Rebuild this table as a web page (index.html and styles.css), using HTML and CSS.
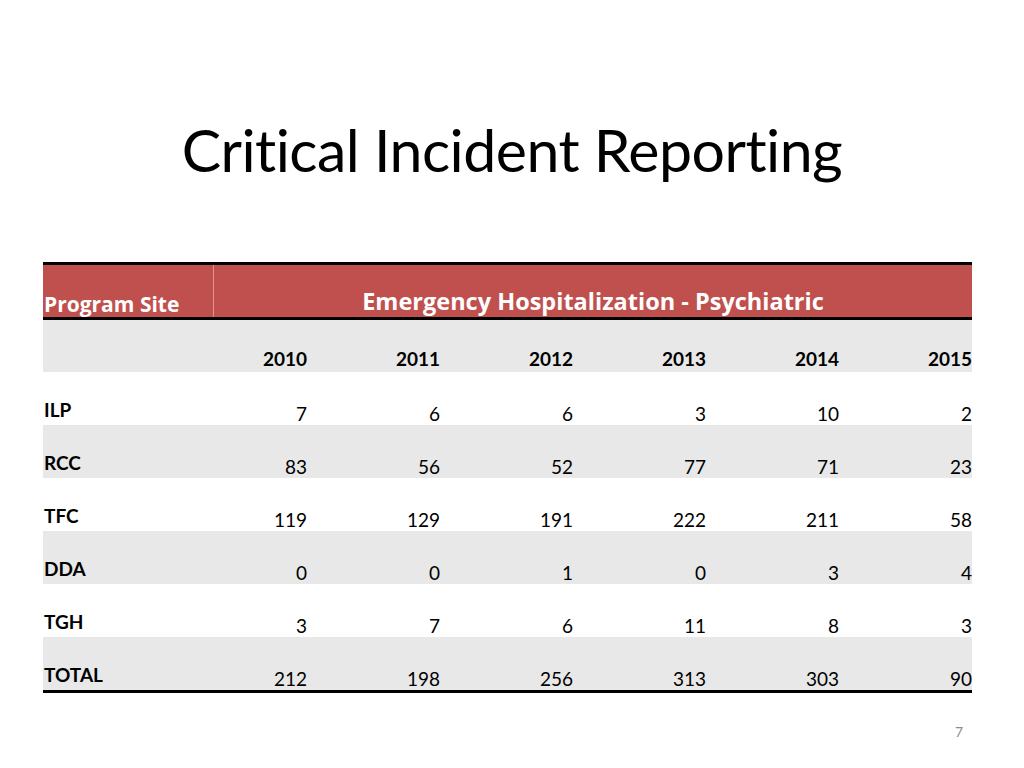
FILE: index.html
```html
<!DOCTYPE html>
<html lang="en">
<head>
<meta charset="utf-8">
<title>Critical Incident Reporting</title>
<link rel="stylesheet" href="styles.css">
</head>
<body>
<main class="slide">
  <h1 class="title">Critical Incident Reporting</h1>
  <section class="table">
    <div class="head">
      <div class="head-site">Program Site</div>
      <div class="head-measure">Emergency Hospitalization - Psychiatric</div>
    </div>
    <div class="row shade years">
      <div class="label"></div>
      <div class="num">2010</div><div class="num">2011</div><div class="num">2012</div><div class="num">2013</div><div class="num">2014</div><div class="num">2015</div>
    </div>
    <div class="row">
      <div class="label">ILP</div>
      <div class="num">7</div><div class="num">6</div><div class="num">6</div><div class="num">3</div><div class="num">10</div><div class="num">2</div>
    </div>
    <div class="row shade">
      <div class="label">RCC</div>
      <div class="num">83</div><div class="num">56</div><div class="num">52</div><div class="num">77</div><div class="num">71</div><div class="num">23</div>
    </div>
    <div class="row">
      <div class="label">TFC</div>
      <div class="num">119</div><div class="num">129</div><div class="num">191</div><div class="num">222</div><div class="num">211</div><div class="num">58</div>
    </div>
    <div class="row shade">
      <div class="label">DDA</div>
      <div class="num">0</div><div class="num">0</div><div class="num">1</div><div class="num">0</div><div class="num">3</div><div class="num">4</div>
    </div>
    <div class="row">
      <div class="label">TGH</div>
      <div class="num">3</div><div class="num">7</div><div class="num">6</div><div class="num">11</div><div class="num">8</div><div class="num">3</div>
    </div>
    <div class="row shade total">
      <div class="label">TOTAL</div>
      <div class="num">212</div><div class="num">198</div><div class="num">256</div><div class="num">313</div><div class="num">303</div><div class="num">90</div>
    </div>
  </section>
  <footer class="page-num">7</footer>
</main>
</body>
</html>
```

FILE: styles.css
```css
html, body {
  margin: 0;
  padding: 0;
  background: #ffffff;
}
.slide {
  width: 1024px;
  height: 768px;
  font-family: Lato, "Open Sans", "Liberation Sans", sans-serif;
  color: #000;
  display: flex;
  flex-direction: column;
  padding: 0 52px 0 43px;
  box-sizing: border-box;
}
.title {
  margin: 113px 0 0 9px;
  font-size: 59px;
  font-weight: 400;
  line-height: 74px;
  text-align: center;
  letter-spacing: -0.5px;
  height: 73px;
}
.table {
  margin-top: 76px;
  display: flex;
  flex-direction: column;
}
.head {
  display: grid;
  grid-template-columns: 170px 1fr;
  height: 52px;
  background: #c0504d;
  border-top: 3px solid #000;
  border-bottom: 3px solid #000;
  color: #fff;
  font-family: "Open Sans", Lato, sans-serif;
  font-weight: 700;
}
.head-site {
  align-self: end;
  font-size: 21px;
  line-height: 26px;
  padding: 0 0 0 1px;
}
.head-measure {
  border-left: 1px solid #e3908e;
  display: flex;
  align-items: flex-end;
  justify-content: center;
  font-size: 23.5px;
  line-height: 30px;
  padding-bottom: 1px;
}
.row {
  display: grid;
  grid-template-columns: 131px repeat(6, 133px);
  height: 53px;
  font-size: 19px;
}
.row.years {
  height: 52px;
  font-weight: 700;
}
.row.years .num {
  padding-bottom: 2px;
}
.shade {
  background: #e8e8e8;
}
.row.total {
  border-bottom: 3px solid #000;
}
.label {
  align-self: end;
  font-weight: 700;
  padding: 0 0 4px 1px;
}
.num {
  align-self: end;
  text-align: right;
  padding-bottom: 0;
}
.page-num {
  margin-top: 30px;
  text-align: right;
  padding-right: 9px;
  color: #8c8c8c;
  font-size: 14px;
}
```
